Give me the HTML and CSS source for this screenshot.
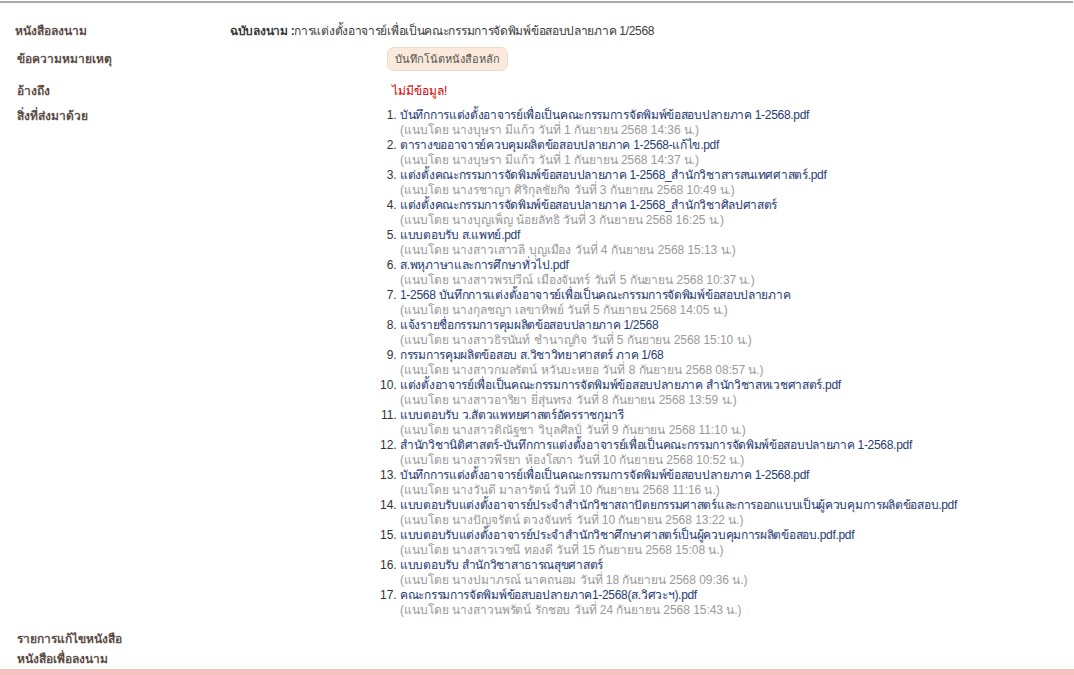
FILE: index.html
```html
<!DOCTYPE html>
<html lang="th">
<head>
<meta charset="utf-8">
<title>หนังสือลงนาม</title>
<link rel="stylesheet" href="styles.css">
</head>
<body>
<div class="page">
  <div class="topline"></div>
  <div class="row row-title">
    <div class="label label-first">หนังสือลงนาม</div>
    <div class="value"><b>ฉบับลงนาม :</b>การแต่งตั้งอาจารย์เพื่อเป็นคณะกรรมการจัดพิมพ์ข้อสอบปลายภาค 1/2568</div>
  </div>
  <div class="row row-note">
    <div class="label">ข้อความหมายเหตุ</div>
    <div class="value"><button class="btn">บันทึกโน้ตหนังสือหลัก</button></div>
  </div>
  <div class="row row-ref">
    <div class="label">อ้างถึง</div>
    <div class="value nodata">ไม่มีข้อมูล!</div>
  </div>
  <div class="row row-att">
    <div class="label">สิ่งที่ส่งมาด้วย</div>
    <div class="value">
      <ol class="files">
        <li><a>บันทึกการแต่งตั้งอาจารย์เพื่อเป็นคณะกรรมการจัดพิมพ์ข้อสอบปลายภาค 1-2568.pdf</a><span class="by">(แนบโดย นางบุษรา มีแก้ว วันที่ 1 กันยายน 2568 14:36 น.)</span></li>
        <li><a>ตารางขออาจารย์ควบคุมผลิตข้อสอบปลายภาค 1-2568-แก้ไข.pdf</a><span class="by">(แนบโดย นางบุษรา มีแก้ว วันที่ 1 กันยายน 2568 14:37 น.)</span></li>
        <li><a>แต่งตั้งคณะกรรมการจัดพิมพ์ข้อสอบปลายภาค 1-2568_สำนักวิชาสารสนเทศศาสตร์.pdf</a><span class="by">(แนบโดย นางรชาญา ศิริกุลชัยกิจ วันที่ 3 กันยายน 2568 10:49 น.)</span></li>
        <li><a>แต่งตั้งคณะกรรมการจัดพิมพ์ข้อสอบปลายภาค 1-2568_สำนักวิชาศิลปศาสตร์</a><span class="by">(แนบโดย นางบุญเพ็ญ น้อยลัทธิ วันที่ 3 กันยายน 2568 16:25 น.)</span></li>
        <li><a>แบบตอบรับ ส.แพทย์.pdf</a><span class="by">(แนบโดย นางสาวเสาวลี บุญเมือง วันที่ 4 กันยายน 2568 15:13 น.)</span></li>
        <li><a>ส.พหุภาษาและการศึกษาทั่วไป.pdf</a><span class="by">(แนบโดย นางสาวพรปวีณ์ เมืองจันทร์ วันที่ 5 กันยายน 2568 10:37 น.)</span></li>
        <li><a>1-2568 บันทึกการแต่งตั้งอาจารย์เพื่อเป็นคณะกรรมการจัดพิมพ์ข้อสอบปลายภาค</a><span class="by">(แนบโดย นางกุลชญา เลขาทิพย์ วันที่ 5 กันยายน 2568 14:05 น.)</span></li>
        <li><a>แจ้งรายชื่อกรรมการคุมผลิตข้อสอบปลายภาค 1/2568</a><span class="by">(แนบโดย นางสาวธิรนันท์ ชำนาญกิจ วันที่ 5 กันยายน 2568 15:10 น.)</span></li>
        <li><a>กรรมการคุมผลิตข้อสอบ ส.วิชาวิทยาศาสตร์ ภาค 1/68</a><span class="by">(แนบโดย นางสาวกมลรัตน์ หวันบะหยอ วันที่ 8 กันยายน 2568 08:57 น.)</span></li>
        <li><a>แต่งตั้งอาจารย์เพื่อเป็นคณะกรรมการจัดพิมพ์ข้อสอบปลายภาค สำนักวิชาสหเวชศาสตร์.pdf</a><span class="by">(แนบโดย นางสาวอาริยา ยี่สุ่นทรง วันที่ 8 กันยายน 2568 13:59 น.)</span></li>
        <li><a>แบบตอบรับ ว.สัตวแพทยศาสตร์อัครราชกุมารี</a><span class="by">(แนบโดย นางสาวดิณัฐชา วิบุลศิลป์ วันที่ 9 กันยายน 2568 11:10 น.)</span></li>
        <li><a>สำนักวิชานิติศาสตร์-บันทึกการแต่งตั้งอาจารย์เพื่อเป็นคณะกรรมการจัดพิมพ์ข้อสอบปลายภาค 1-2568.pdf</a><span class="by">(แนบโดย นางสาวพีรยา ห้องโสภา วันที่ 10 กันยายน 2568 10:52 น.)</span></li>
        <li><a>บันทึกการแต่งตั้งอาจารย์เพื่อเป็นคณะกรรมการจัดพิมพ์ข้อสอบปลายภาค 1-2568.pdf</a><span class="by">(แนบโดย นางวันดี มาลารัตน์ วันที่ 10 กันยายน 2568 11:16 น.)</span></li>
        <li><a>แบบตอบรับแต่งตั้งอาจารย์ประจำสำนักวิชาสถาปัตยกรรมศาสตร์และการออกแบบเป็นผู้ควบคุมการผลิตข้อสอบ.pdf</a><span class="by">(แนบโดย นางปัญจรัตน์ ดวงจันทร์ วันที่ 10 กันยายน 2568 13:22 น.)</span></li>
        <li><a>แบบตอบรับแต่งตั้งอาจารย์ประจำสำนักวิชาศึกษาศาสตร์เป็นผู้ควบคุมการผลิตข้อสอบ.pdf.pdf</a><span class="by">(แนบโดย นางสาวเวชนี ทองดี วันที่ 15 กันยายน 2568 15:08 น.)</span></li>
        <li><a>แบบตอบรับ สำนักวิชาสาธารณสุขศาสตร์</a><span class="by">(แนบโดย นางปมาภรณ์ นาคถนอม วันที่ 18 กันยายน 2568 09:36 น.)</span></li>
        <li><a>คณะกรรมการจัดพิมพ์ข้อสบอปลายภาค1-2568(ส.วิศวะฯ).pdf</a><span class="by">(แนบโดย นางสาวนพรัตน์ รักชอบ วันที่ 24 กันยายน 2568 15:43 น.)</span></li>
      </ol>
    </div>
  </div>
  <div class="row row-edit">
    <div class="label">รายการแก้ไขหนังสือ</div>
  </div>
  <div class="row row-sign">
    <div class="label">หนังสือเพื่อลงนาม</div>
  </div>
  <div class="pinkbar"></div>
</div>
</body>
</html>
```
FILE: styles.css
```css
html, body {
  margin: 0;
  padding: 0;
  background: #ffffff;
}
body {
  font-family: Tahoma, "Liberation Sans", "Noto Sans", "DejaVu Sans", sans-serif;
  font-size: 12px;
  color: #333333;
}
.page {
  width: 1074px;
  height: 675px;
  display: flex;
  flex-direction: column;
  overflow: hidden;
}
.topline {
  height: 2px;
  margin-top: 1px;
  background: #aaaaaa;
  margin-right: 1px;
}
.row {
  display: flex;
  align-items: flex-start;
}
.label {
  width: 370px;
  padding-left: 17px;
  flex: none;
  font-weight: bold;
  color: #5b4b45;
  line-height: 15px;
}
.label-first {
  width: 215px;
  padding-left: 15px;
}
.row-title {
  margin-top: 20px;
  line-height: 17px;
}
.row-title .label { line-height: 17px; }
.row-title .value b {
  color: #383838;
}
.row-title .value {
  color: #3c3c3c;
  letter-spacing: -0.3px;
}
.row-note {
  margin-top: 6px;
  align-items: center;
  height: 26px;
}
.btn {
  font-family: inherit;
  font-size: 11px;
  color: #555555;
  background: #fbeadb;
  border: 1px solid #efdcc8;
  border-radius: 7px;
  height: 24px;
  width: 121px;
  padding: 0;
  margin: 0;
  cursor: pointer;
}
.row-ref {
  margin-top: 12px;
}
.nodata {
  color: #d40000;
  padding-left: 5px;
  line-height: 15px;
}
.row-att {
  margin-top: 9px;
}
.row-att .label {
  padding-top: 1px;
}
.files {
  margin: 0;
  padding-left: 13px;
  line-height: 15px;
}
.files li a {
  display: block;
  color: #1f3c74;
  letter-spacing: -0.3px;
}
.files li .by {
  display: block;
  color: #9a9a9a;
  letter-spacing: -0.05px;
}
.row-edit {
  margin-top: 14px;
}
.row-sign {
  margin-top: 5px;
}
.pinkbar {
  margin-top: auto;
  height: 6px;
  background: #f4c0c0;
}
```
